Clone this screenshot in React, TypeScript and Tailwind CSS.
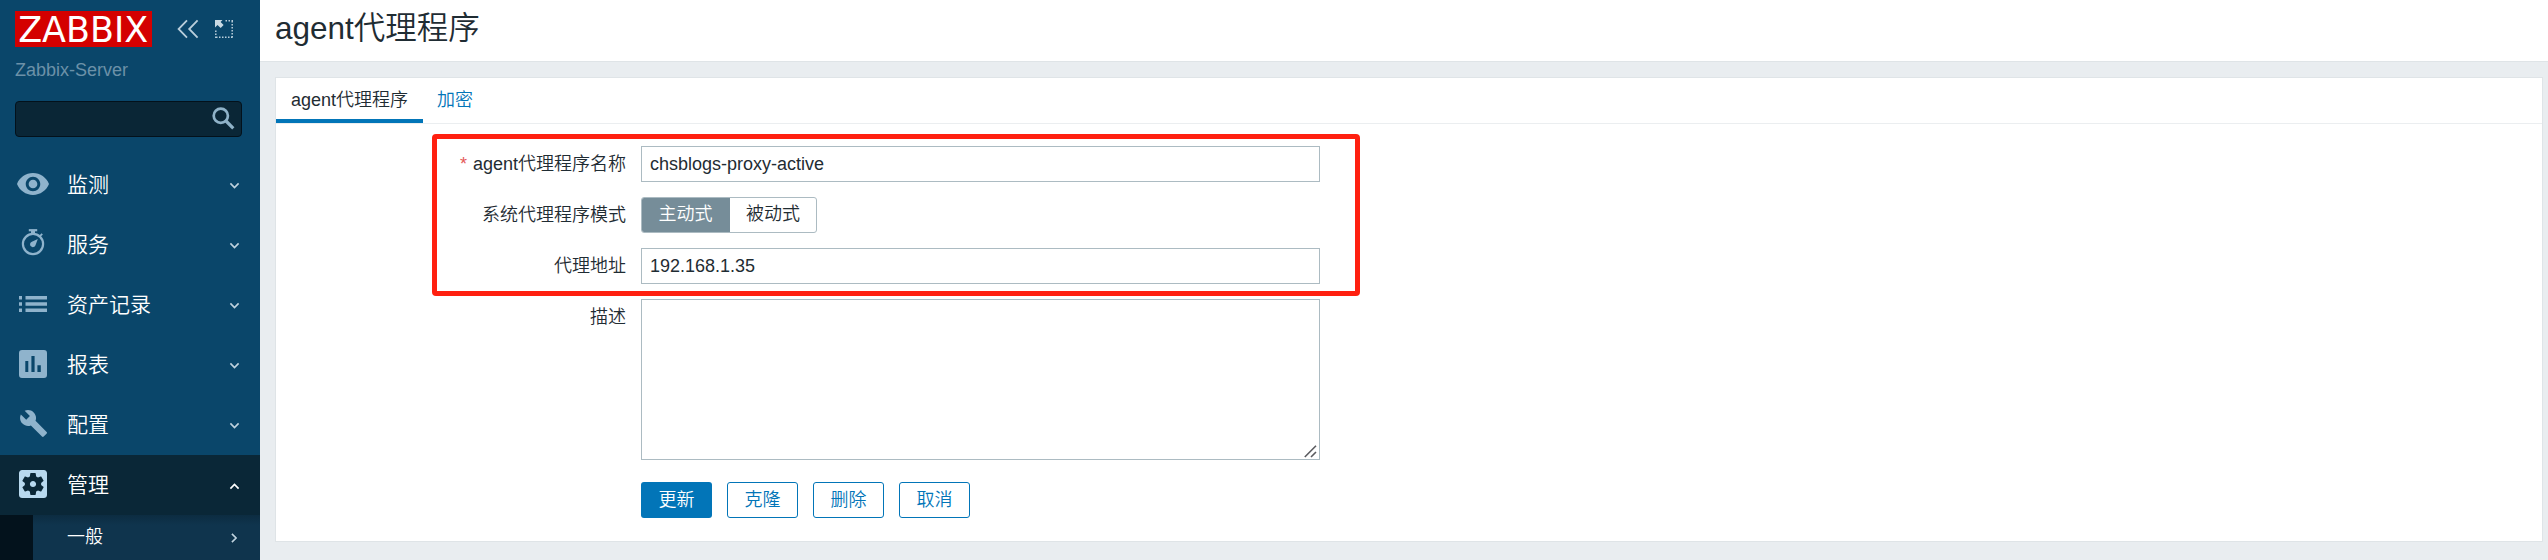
import type { ReactNode } from "react";

const CJK = "font-['Liberation_Sans','Noto_Sans_CJK_SC',sans-serif]";

function Chevron({ className = "" }: { className?: string }) {
  return (
    <svg className={className} width="11" height="8" viewBox="0 0 11 8" fill="none" stroke="currentColor" strokeWidth="1.6">
      <path d="M1.4 1.4 5.5 5.6 9.6 1.4" />
    </svg>
  );
}

function MenuIcon({ w, h, box, children }: { w: number; h: number; box: string; children: ReactNode }) {
  return (
    <svg width={w} height={h} viewBox={box} fill="currentColor" fillRule="evenodd">
      {children}
    </svg>
  );
}

const menu = [
  {
    label: "监测",
    icon: (
      <MenuIcon w={32} h={22} box="1 4.5 22 15">
        <path d="M12 4.5C7 4.5 2.73 7.61 1 12c1.73 4.39 6 7.5 11 7.5s9.27-3.11 11-7.5c-1.73-4.39-6-7.5-11-7.5zM12 17c-2.76 0-5-2.24-5-5s2.24-5 5-5 5 2.24 5 5-2.24 5-5 5zm0-8c-1.66 0-3 1.34-3 3s1.34 3 3 3 3-1.34 3-3-1.34-3-3-3z" />
      </MenuIcon>
    ),
  },
  {
    label: "服务",
    icon: (
      <svg width="24" height="28" viewBox="0 0 24 28" fill="none" stroke="currentColor" className="mb-1">
        <circle cx="12" cy="16" r="10.1" strokeWidth="2.2" />
        <path d="M7.8 2.2h8.4" strokeWidth="2.2" />
        <path d="M12 2.5v3.5" strokeWidth="4" />
        <path d="M19 8.2l2.2-2.4" strokeWidth="1.8" />
        <path d="M16.8 11 14.5 17.2A2.8 2.8 0 1 1 10.9 13.7z" fill="currentColor" stroke="none" />
      </svg>
    ),
  },
  {
    label: "资产记录",
    icon: (
      <MenuIcon w={28} h={16} box="0 0 28 16">
        <path d="M0 0h3v3.4H0zM6.5 0H28v3.4H6.5zM0 6.3h3v3.4H0zM6.5 6.3H28v3.4H6.5zM0 12.6h3V16H0zM6.5 12.6H28V16H6.5z" />
      </MenuIcon>
    ),
  },
  {
    label: "报表",
    icon: (
      <MenuIcon w={28} h={28} box="0 0 28 28">
        <path d="M3 0h22a3 3 0 0 1 3 3v22a3 3 0 0 1-3 3H3a3 3 0 0 1-3-3V3a3 3 0 0 1 3-3zM6.3 11v11h3V11zM12.4 6v16h3.2V6zM18.4 15.3V22h3.4v-6.7z" />
      </MenuIcon>
    ),
  },
  {
    label: "配置",
    icon: (
      <MenuIcon w={27} h={27} box="0.9 1 22.1 22.1">
        <path d="M22.7 19l-9.1-9.1c.9-2.3.4-5-1.5-6.9-2-2-5-2.4-7.4-1.3L9 6 6 9 1.6 4.7C.4 7.1.9 10.1 2.9 12.1c1.9 1.9 4.6 2.4 6.9 1.5l9.1 9.1c.4.4 1 .4 1.4 0l2.3-2.3c.5-.4.5-1.1.1-1.4z" />
      </MenuIcon>
    ),
  },
];

function Field({ label, required, className = "h-9", children }: { label: string; required?: boolean; className?: string; children: ReactNode }) {
  return (
    <div className={`flex items-start ${className}`}>
      <div className="w-[350px] shrink-0 pr-[15px] text-right leading-9">
        {required && <span className="mr-[6px] text-[#e45959]">*</span>}
        {label}
      </div>
      {children}
    </div>
  );
}

function Sidebar() {
  return (
    <aside className="flex h-full w-[260px] shrink-0 flex-col overflow-hidden bg-[#0a466a]">
      <div className="flex h-[47px] items-start pl-[15px] pt-[11px]">
        <svg width="137" height="36" viewBox="0 0 137 36" className="overflow-visible">
          <rect width="137" height="36" fill="#d40000" />
          <text x="3.2" y="30.6" fontFamily="DejaVu Sans" fontWeight="400" fontSize="35" textLength="130" lengthAdjust="spacingAndGlyphs" fill="#fff">ZABBIX</text>
        </svg>
        <svg width="22" height="20" viewBox="0 0 22 20" className="ml-[25px] mt-[8px]" fill="none" stroke="#b9cedb" strokeWidth="1.8">
          <path d="M10 1.4 1.6 10l8.4 8.6M20.6 1.4 12.2 10l8.4 8.6" />
        </svg>
        <svg width="18" height="18" viewBox="0 0 18 18" className="ml-[16px] mt-[9px]" fill="none" stroke="#b9cedb" strokeWidth="1.5">
          <path d="M10.5.8H18M17.2 1v17M.8 10.5V18M1 17.2h17" strokeDasharray="1.5 1.5" />
          <path d="M0 0h7.5L5.6 2l3 3.1-2.9 2.9-3.2-3L0 7.5z" fill="#c9dae4" stroke="none" />
        </svg>
      </div>
      <div className="mt-[11px] pl-[15px] text-lg leading-6 text-[#6c91a8]">Zabbix-Server</div>
      <div className="ml-[15px] mt-[19px] flex h-9 w-[227px] shrink-0 items-center justify-end rounded-[4px] border border-[#03111b] bg-[#0a2636] pr-[6px]">
        <svg width="23" height="23" viewBox="0 0 23 23" fill="none" stroke="#8fb2c8" className="-mt-[1px]">
          <circle cx="8.8" cy="8.8" r="7.1" strokeWidth="2.7" />
          <path d="M14 14l7.3 7.3" strokeWidth="3.2" />
        </svg>
      </div>
      <nav className="mt-[18px]">
        {menu.map((m) => (
          <div key={m.label} className="flex h-[60px] items-center text-[21px] text-white">
            <span className="flex w-[67px] justify-center pb-[3px] pr-px text-[#8fb3cc]">{m.icon}</span>
            <span className="flex-1">{m.label}</span>
            <Chevron className="mr-5 mt-[1px] text-[#c0d3df]" />
          </div>
        ))}
        <div className="flex h-[60px] items-center bg-[#0a2737] text-[21px] text-white">
          <span className="flex w-[67px] justify-center pb-[3px] pr-px text-[#b8d9ef]">
            <MenuIcon w={28} h={28} box="3 3 18 18">
              <path d="M12 10c-1.1 0-2 .9-2 2s.9 2 2 2 2-.9 2-2-.9-2-2-2zm7-7H5c-1.11 0-2 .9-2 2v14c0 1.1.89 2 2 2h14c1.11 0 2-.9 2-2V5c0-1.1-.89-2-2-2zm-1.75 9c0 .23-.02.46-.05.68l1.48 1.16c.13.11.17.3.08.45l-1.4 2.42c-.09.15-.27.21-.43.15l-1.74-.7c-.36.28-.76.51-1.18.69l-.26 1.85c-.03.17-.18.3-.35.3h-2.8c-.17 0-.32-.13-.35-.29l-.26-1.85c-.43-.18-.82-.41-1.18-.69l-1.74.7c-.16.06-.34 0-.43-.15l-1.4-2.42c-.09-.15-.05-.34.08-.45l1.48-1.16c-.03-.23-.05-.46-.05-.69 0-.23.02-.46.05-.68l-1.48-1.16c-.13-.11-.17-.3-.08-.45l1.4-2.42c.09-.15.27-.21.43-.15l1.74.7c.36-.28.76-.51 1.18-.69l.26-1.85c.03-.17.18-.3.35-.3h2.8c.17 0 .32.13.35.29l.26 1.85c.43.18.82.41 1.18.69l1.74-.7c.16-.06.34 0 .43.15l1.4 2.42c.09.15.05.34-.08.45l-1.48 1.16c.03.23.05.46.05.69z" />
            </MenuIcon>
          </span>
          <span className="flex-1">管理</span>
          <Chevron className="mr-5 mt-[1px] rotate-180 text-white" />
        </div>
        <div className="flex h-[45px] bg-[#03121c] pl-[33px]">
          <div className="flex flex-1 items-center bg-[linear-gradient(#0c2c41,#0f344d_10px)] pl-[34px] text-lg text-white">
            <span className="-mt-px flex-1">一般</span>
            <Chevron className="mr-5 -rotate-90 text-[#c0d3df]" />
          </div>
        </div>
      </nav>
    </aside>
  );
}

const outline = "h-9 w-[71px] rounded-[3px] border border-[#0275b8] text-[#0275b8] leading-none";

export default function App() {
  return (
    <div className={`flex h-[560px] w-[2548px] overflow-hidden bg-[#e9edf0] text-lg font-[350] text-[#1f2c33] ${CJK}`}>
      <Sidebar />
      <main className="flex min-w-0 flex-1 flex-col">
        <header className="flex h-[62px] items-center border-b border-[#dfe4e7] bg-white pb-[4px] pl-[15px]">
          <h1 className="text-[31.5px] font-[350] leading-none">agent代理程序</h1>
        </header>
        <section className="relative ml-[15px] mr-[5px] mt-[15px] h-[465px] border border-[#dfe4e7] bg-white">
          <div className="flex h-[46px] border-b border-[#ebeef0]">
            <div className="flex h-[45px] w-[147px] items-center justify-center border-b-4 border-[#0275b8] pt-[2px]">agent代理程序</div>
            <div className="flex h-[41px] items-center pl-[14px] pt-[2px] text-[#0275b8]">加密</div>
          </div>
          <div className="flex flex-col gap-[15px] pl-[15px] pt-[22px]">
            <Field label="agent代理程序名称" required>
              <input className="h-9 w-[679px] border border-[#acbbc2] px-2 outline-none" defaultValue="chsblogs-proxy-active" />
            </Field>
            <Field label="系统代理程序模式">
              <div className="flex h-9 w-[176px] overflow-hidden rounded-[3px] border border-[#acbbc2] leading-[33px]">
                <div className="-my-px -ml-px w-[89px] border border-[#768d99] bg-[#768d99] text-center text-white">主动式</div>
                <div className="flex-1 text-center">被动式</div>
              </div>
            </Field>
            <Field label="代理地址">
              <input className="h-9 w-[679px] border border-[#acbbc2] px-2 outline-none" defaultValue="192.168.1.35" />
            </Field>
            <Field label="描述" className="h-[161px]">
              <div className="flex h-[161px] w-[679px] items-end justify-end border border-[#acbbc2] p-[1px]">
                <svg width="13" height="13" viewBox="0 0 13 13" stroke="#5b5b5f" strokeWidth="1.6" className="mr-px">
                  <path d="M.8 12 12 .8M7 12l5-5" />
                </svg>
              </div>
            </Field>
          </div>
          <div className="flex gap-[15px] pl-[365px] pt-[22px]">
            <button className="h-9 w-[71px] rounded-[3px] bg-[#0275b8] leading-none text-white">更新</button>
            <button className={outline}>克隆</button>
            <button className={outline}>删除</button>
            <button className={outline}>取消</button>
          </div>
          <div className="pointer-events-none absolute left-[156px] top-[56px] h-[162px] w-[928px] rounded-[4px] border-[5px] border-[#ff2010]" />
        </section>
      </main>
    </div>
  );
}
